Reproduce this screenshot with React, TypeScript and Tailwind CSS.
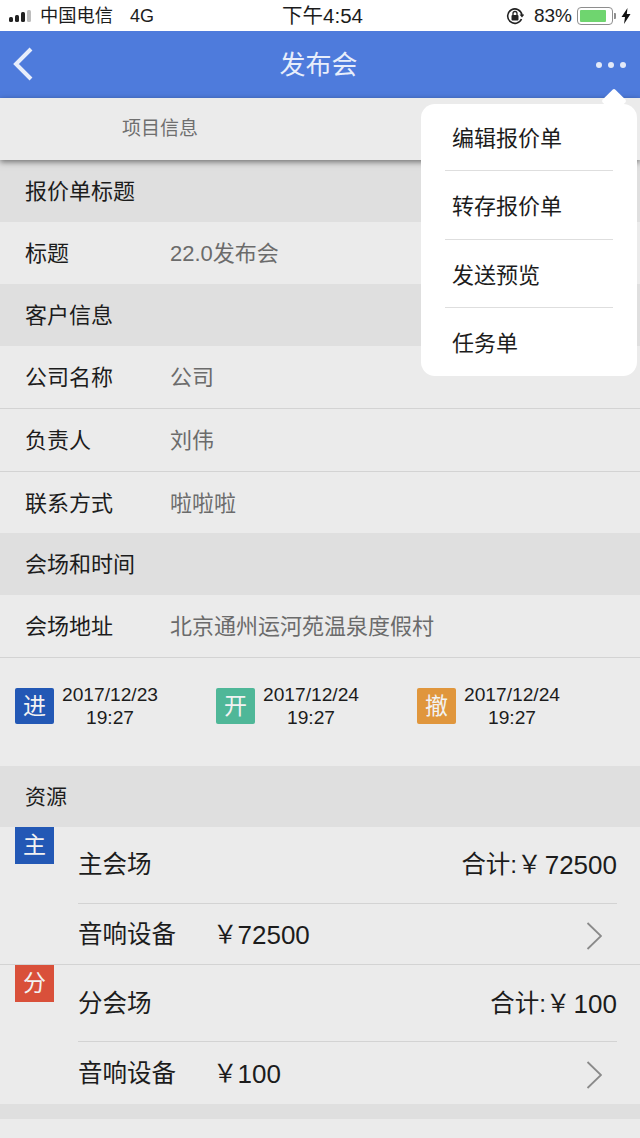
const FONT = "font-['Liberation_Sans','Noto_Sans_CJK_SC',sans-serif]";

function SectionHeader({ title }: { title: string }) {
  return (
    <div className="flex h-[62px] items-center bg-[#dfdfdf] pl-[25px] pt-[1px] text-[22px] text-[#1c1c1c]">
      {title}
    </div>
  );
}

function InfoRow({ label, value }: { label: string; value: string }) {
  return (
    <div className="flex h-[63px] items-center border-b border-[#d3d3d3] pl-[25px] text-[22px]">
      <span className="w-[145px] text-[#1c1c1c]">{label}</span>
      <span className="text-[#6b6b6b]">{value}</span>
    </div>
  );
}

function PlainRow({ label, value, height }: { label: string; value: string; height: string }) {
  return (
    <div className={`flex items-center pl-[25px] pt-[1px] text-[22px] ${height}`}>
      <span className="w-[145px] text-[#1c1c1c]">{label}</span>
      <span className="text-[#6b6b6b]">{value}</span>
    </div>
  );
}

function DateItem({ badge, color, date }: { badge: string; color: string; date: string }) {
  return (
    <div className="flex items-center">
      <div className={`flex h-[36px] w-[39px] items-center justify-center rounded-[2px] text-[23px] text-[#f2f2f2] ${color}`}>
        {badge}
      </div>
      <div className="ml-[8px] text-center text-[19.2px] leading-[23px] text-[#1c1c1c]">
        <div>{date}</div>
        <div>19:27</div>
      </div>
    </div>
  );
}

function Venue({
  badge,
  color,
  name,
  total,
  price,
  lowerHeight,
  last,
}: {
  badge: string;
  color: string;
  name: string;
  total: string;
  price: string;
  lowerHeight: string;
  last?: boolean;
}) {
  return (
    <div className={`flex items-start ${last ? "" : "border-b border-[#d3d3d3]"}`}>
      <div className={`ml-[15px] flex h-[37px] w-[39px] shrink-0 items-center justify-center text-[23px] text-[#f2f2f2] ${color}`}>
        {badge}
      </div>
      <div className="ml-[24px] mr-[23px] flex-1 text-[#1c1c1c]">
        <div className={`flex h-[77px] items-center justify-between border-b border-[#d3d3d3] text-[24.5px] ${last ? "pt-[2px]" : ""}`}>
          <span>{name}</span>
          <span className="flex items-center">
            合计:￥<span className="ml-[3px] text-[26px]">{total}</span>
          </span>
        </div>
        <div className={`flex items-center pt-[3px] text-[24.5px] ${lowerHeight}`}>
          <span className="w-[135px]">音响设备</span>
          <span className="flex flex-1 items-center">
            ￥<span className="text-[26px]">{price}</span>
          </span>
          <svg width="16" height="28" viewBox="0 0 16 28" className="mr-[15px]">
            <path d="M1.5 1 15 14 1.5 27" fill="none" stroke="#8a8a8a" strokeWidth="1.8" />
          </svg>
        </div>
      </div>
    </div>
  );
}

export default function App() {
  return (
    <div className={`relative h-[1138px] w-[640px] overflow-hidden bg-[#ebebeb] ${FONT}`}>
      {/* status bar */}
      <div className="flex h-[31px] items-center justify-between bg-white px-[9px] pt-[1px] text-[#1c1c1c]">
        <div className="flex w-[210px] items-center">
          <svg width="24" height="14" viewBox="0 0 24 14" className="mr-[7px]">
            <rect x="0" y="8" width="4" height="5" rx="1.5" fill="#222" />
            <rect x="6" y="6" width="4" height="7" rx="1.5" fill="#222" />
            <rect x="12" y="3" width="4" height="10" rx="1.5" fill="#222" />
            <rect x="18" y="1" width="4" height="12" rx="1.5" fill="#bdbdbd" />
          </svg>
          <span className="text-[18.25px]">中国电信</span>
          <span className="ml-[17px] text-[18px]">4G</span>
        </div>
        <span className="ml-[5px] text-[20.5px]">下午4:54</span>
        <div className="flex w-[210px] items-center justify-end">
          <svg width="18" height="18" viewBox="0 0 18 18" className="mr-[10px]">
            <path d="M15.5 12A7.2 7.2 0 1 1 16 8" fill="none" stroke="#222" strokeWidth="1.6" />
            <path d="M13.5 7.5h5l-2.5 3z" fill="#222" />
            <rect x="5.5" y="8" width="7" height="5.5" rx="1" fill="#222" />
            <path d="M7 8V6.5a2 2 0 0 1 4 0V8" fill="none" stroke="#222" strokeWidth="1.3" />
          </svg>
          <span className="text-[19px]">83%</span>
          <div className="ml-[5px] flex h-[18px] w-[36px] items-center rounded-[4px] border border-[#8e8e8e] p-[2px]">
            <div className="h-full w-[85%] rounded-[1px] bg-[#6fd56f]" />
          </div>
          <div className="ml-[1px] h-[6px] w-[2px] rounded-r-[1px] bg-[#8e8e8e]" />
          <svg width="10" height="16" viewBox="0 0 10 16" className="ml-[5px]">
            <path d="M6.5 0 0.5 9h3.5L3 16l6.5-10H5.8z" fill="#111" />
          </svg>
        </div>
      </div>

      {/* nav bar */}
      <div className="relative flex h-[67px] items-center justify-center bg-[#4e7bdc] text-[26px] text-[#e8eefb]">
        <svg width="22" height="34" viewBox="0 0 22 34" className="absolute left-[12px] top-[16px]">
          <path d="M19 2 4 17l15 15" fill="none" stroke="#e8eefb" strokeWidth="4" />
        </svg>
        <span className="-ml-[3px] pt-[2px]">发布会</span>
        <div className="absolute right-[14px] top-[31px] flex gap-[6px]">
          <span className="size-[6px] rounded-full bg-[#e3e9f8]" />
          <span className="size-[6px] rounded-full bg-[#e3e9f8]" />
          <span className="size-[6px] rounded-full bg-[#e3e9f8]" />
        </div>
      </div>

      {/* tabs */}
      <div className="relative z-10 flex h-[62px] items-center bg-[#ebebeb] shadow-[0_2px_6px_rgba(0,0,0,0.5)]">
        <div className="w-1/2 text-center text-[19px] text-[#6f6f6f]">项目信息</div>
      </div>

      <SectionHeader title="报价单标题" />
      <PlainRow label="标题" value="22.0发布会" height="h-[62px]" />
      <SectionHeader title="客户信息" />
      <InfoRow label="公司名称" value="公司" />
      <InfoRow label="负责人" value="刘伟" />
      <PlainRow label="联系方式" value="啦啦啦" height="h-[61px]" />
      <SectionHeader title="会场和时间" />
      <InfoRow label="会场地址" value="北京通州运河苑温泉度假村" />

      <div className="grid h-[108px] grid-cols-[201px_201px_1fr] pb-[47px] pl-[15px] pt-[25px]">
        <DateItem badge="进" color="bg-[#2358b5]" date="2017/12/23" />
        <DateItem badge="开" color="bg-[#4fb798]" date="2017/12/24" />
        <DateItem badge="撤" color="bg-[#e0963c]" date="2017/12/24" />
      </div>

      <div className="flex h-[61px] items-center bg-[#dfdfdf] pl-[25px] text-[21px] text-[#1c1c1c]">资源</div>
      <Venue badge="主" color="bg-[#2358b5]" name="主会场" total="72500" price="72500" lowerHeight="h-[60px]" />
      <Venue badge="分" color="bg-[#d9503a]" name="分会场" total="100" price="100" lowerHeight="h-[62px]" last />
      <div className="h-[15px] bg-[#dfdfdf]" />

      {/* popover menu */}
      <div className="absolute left-[421px] top-[104px] z-20 w-[216px] rounded-[14px] bg-white px-[24px] text-[22px] text-[#1c1c1c]">
        <div className="absolute right-[14px] top-[-12px] size-[18px] rotate-45 rounded-[2px] bg-white" />
        <div className="relative flex h-[67px] items-center border-b border-[#dedede] pl-[7px] pt-[3px]">编辑报价单</div>
        <div className="flex h-[69px] items-center border-b border-[#dedede] pl-[7px] pt-[3px]">转存报价单</div>
        <div className="flex h-[68px] items-center border-b border-[#dedede] pl-[7px] pt-[3px]">发送预览</div>
        <div className="flex h-[68px] items-center pl-[7px] pt-[3px]">任务单</div>
      </div>
    </div>
  );
}
